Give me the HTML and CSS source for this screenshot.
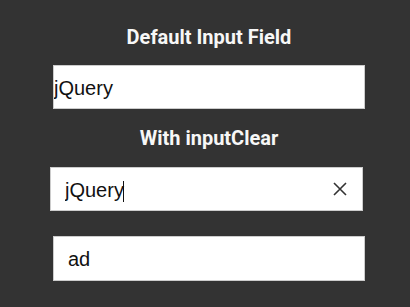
FILE: index.html
```html
<html>
  <head>
    <link rel="stylesheet" href="styles.css">
    <title>inputClear demo</title>
  </head>
  <body>
    <div class="demo-wrapper">
      <h2>Default Input Field</h2>
      <input class="field field-plain" type="text" value="jQuery">

      <h2 class="second">With inputClear</h2>
      <div class="clear-wrap">
        <input class="field" type="text" value="jQuery">
        <span class="caret"></span>
        <span class="clear-btn">
          <svg width="14" height="14" viewBox="0 0 14 14">
            <path d="M1 1L13 13M13 1L1 13" stroke="#333" stroke-width="1.6" fill="none"/>
          </svg>
        </span>
      </div>

      <input class="field field-last" type="text" value="ad">
    </div>
  </body>
</html>
```

FILE: styles.css
```css
body {
  background-color: #333;
  margin: 0;
  font-family: Roboto, "Liberation Sans", sans-serif;
}
.demo-wrapper {
  display: flex;
  flex-direction: column;
  width: 312px;
  margin-left: 53px;
  padding-top: 25px;
}
h2 {
  margin: 0 0 16px;
  color: #f7f7f7;
  font-size: 20px;
  font-weight: 700;
  line-height: 24px;
  text-align: center;
}
h2.second {
  margin: 17px 0 17px;
}
.field {
  box-sizing: border-box;
  width: 100%;
  height: 44px;
  margin: 0;
  padding: 2px 14px 0;
  border: 1px solid #ccc;
  background: #fff;
  color: #111;
  font-family: "Liberation Sans", Arial, sans-serif;
  font-size: 20px;
  outline: none;
}
.field-plain {
  padding-left: 0;
}
.clear-wrap {
  position: relative;
  margin-left: -3px;
  margin-right: 2px;
}
.clear-wrap .field {
  padding-right: 40px;
}
.caret {
  position: absolute;
  top: 14px;
  left: 73px;
  width: 1px;
  height: 21px;
  background: #111;
}
.clear-btn {
  position: absolute;
  top: 15px;
  right: 16px;
  width: 14px;
  height: 14px;
  display: flex;
}
.field-last {
  margin-top: 25px;
  height: 45px;
}
```
